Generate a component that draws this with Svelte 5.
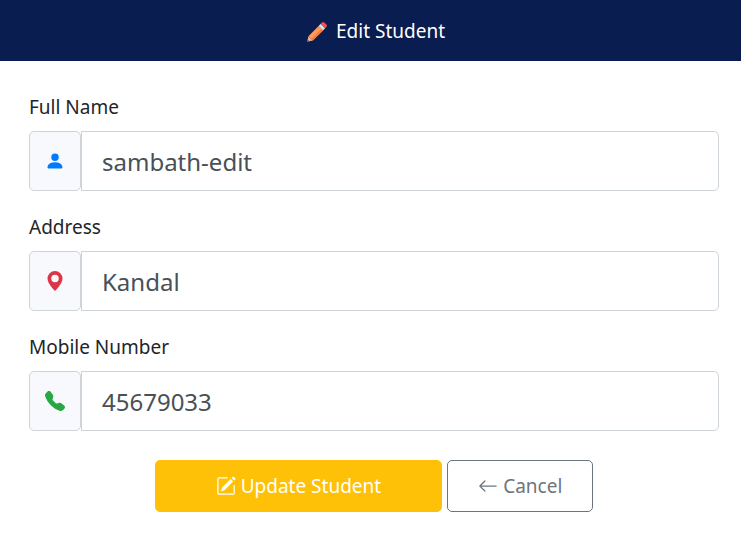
<script>
  let fullName = $state('sambath-edit');
  let address = $state('Kandal');
  let mobile = $state('45679033');
</script>

<header>
  <h1>
    <svg class="pencil" viewBox="0 0 22 22" aria-hidden="true">
      <path fill="#f4b183" d="M1.2 20.8 2.4 15.2 6.8 19.6Z" />
      <path fill="#6b5a60" d="M1.2 20.8 1.700 18.400 3.600 20.300Z" />
      <path fill="#ff9a56" d="M2.400 15.200 12.600 5 17 9.400 6.800 19.600Z" />
      <path fill="#f07a45" d="M5.300 18.100 15.500 7.900 17 9.400 6.800 19.600Z" />
      <path fill="#d5dfe8" d="M12.600 5 14.800 2.800 19.200 7.200 17 9.400Z" />
      <path fill="#f8504f" d="M14.800 2.800 16.200 1.400Q17.200.6 18.200 1.400L20.600 3.800Q21.400 4.800 20.600 5.800L19.200 7.200Z" />
    </svg>
    <span>Edit Student</span>
  </h1>
</header>

<form onsubmit={(e) => e.preventDefault()}>
  <div class="field">
    <label for="full-name">Full Name</label>
    <div class="group">
      <span class="addon user">
        <svg viewBox="0 0 16 16" fill="currentColor" aria-hidden="true">
          <path d="M3 14s-1 0-1-1 1-4 6-4 6 3 6 4-1 1-1 1zm5-6a3 3 0 1 0 0-6 3 3 0 0 0 0 6" />
        </svg>
      </span>
      <input id="full-name" type="text" bind:value={fullName} />
    </div>
  </div>

  <div class="field">
    <label for="address">Address</label>
    <div class="group">
      <span class="addon place">
        <svg viewBox="0 0 16 16" fill="currentColor" aria-hidden="true">
          <path d="M8 16s6-5.686 6-10A6 6 0 0 0 2 6c0 4.314 6 10 6 10m0-7a3 3 0 1 1 0-6 3 3 0 0 1 0 6" />
        </svg>
      </span>
      <input id="address" type="text" bind:value={address} />
    </div>
  </div>

  <div class="field">
    <label for="mobile">Mobile Number</label>
    <div class="group">
      <span class="addon phone">
        <svg viewBox="0 0 16 16" fill="currentColor" aria-hidden="true">
          <path fill-rule="evenodd" d="M1.885.511a1.745 1.745 0 0 1 2.610.163L6.290 2.980c.329.423.445.974.315 1.494l-.547 2.190a.68.68 0 0 0 .178.643l2.457 2.457a.68.68 0 0 0 .644.178l2.189-.547a1.750 1.750 0 0 1 1.494.315l2.306 1.794c.829.645.905 1.870.163 2.611l-1.034 1.034c-.74.740-1.846 1.065-2.877.702a18.600 18.600 0 0 1-7.010-4.420 18.600 18.600 0 0 1-4.420-7.009c-.362-1.030-.037-2.137.703-2.877z" />
        </svg>
      </span>
      <input id="mobile" type="tel" bind:value={mobile} />
    </div>
  </div>

  <div class="actions">
    <button class="update" type="submit">
      <svg viewBox="0 0 16 16" fill="currentColor" aria-hidden="true">
        <path d="M15.502 1.940a.5.5 0 0 1 0 .706L14.459 3.690l-2-2L13.502.646a.5.5 0 0 1 .707 0l1.293 1.293zm-1.750 2.456-2-2L4.939 9.210a.5.5 0 0 0-.121.196l-.805 2.414a.25.25 0 0 0 .316.316l2.414-.805a.5.5 0 0 0 .196-.120z" />
        <path fill-rule="evenodd" d="M1 13.500A1.500 1.500 0 0 0 2.500 15h11a1.500 1.500 0 0 0 1.500-1.500v-6a.5.5 0 0 0-1 0v6a.5.5 0 0 1-.5.5h-11a.5.5 0 0 1-.5-.5v-11a.5.5 0 0 1 .5-.5H9a.5.5 0 0 0 0-1H2.500A1.500 1.500 0 0 0 1 2.500z" />
      </svg>
      Update Student
    </button>
    <button class="cancel" type="button">
      <svg viewBox="0 0 16 16" fill="currentColor" aria-hidden="true">
        <path fill-rule="evenodd" d="M15 8a.5.5 0 0 0-.5-.5H2.707l3.147-3.146a.5.5 0 1 0-.708-.708l-4 4a.5.5 0 0 0 0 .708l4 4a.5.5 0 0 0 .708-.708L2.707 8.500H14.500A.5.5 0 0 0 15 8" />
      </svg>
      Cancel
    </button>
  </div>
</form>

<style>
  :global(body) {
    background: #fff;
    color: #212529;
    font-family: 'Segoe UI', 'Noto Sans', 'Open Sans', sans-serif;
    font-size: 19px;
  }

  header {
    background: #0a1d51;
    color: #fff;
    padding: 17px 10px 15px 20px;
  }

  h1 {
    display: flex;
    align-items: center;
    justify-content: center;
    gap: 8px;
    margin: 0;
    font-size: 19px;
    font-weight: 400;
    line-height: 29px;
  }

  svg {
    display: block;
    flex: none;
    width: 20px;
    height: 20px;
  }

  .pencil {
    width: 22px;
    height: 22px;
  }

  form {
    padding: 31px 22px 21px 29px;
  }

  .field {
    margin-bottom: 21px;
  }

  label {
    display: block;
    margin-bottom: 9px;
    line-height: 30px;
  }

  .group {
    display: flex;
    height: 60px;
  }

  .addon {
    box-sizing: border-box;
    display: flex;
    align-items: center;
    justify-content: center;
    width: 52px;
    border: 1px solid #ced4da;
    border-radius: 5px;
    background: #f8f9fc;
  }

  .user {
    color: #007bff;
  }

  .place {
    color: #dc3545;
  }

  .phone {
    color: #28a745;
  }

  input {
    box-sizing: border-box;
    flex: 1;
    min-width: 0;
    padding: 0 20px;
    border: 1px solid #ced4da;
    border-radius: 0 5px 5px 0;
    background: #fff;
    color: #495057;
    font: inherit;
    font-size: 24px;
  }

  .actions {
    display: flex;
    justify-content: center;
    gap: 5px;
    padding-top: 8px;
  }

  button {
    display: flex;
    align-items: center;
    justify-content: center;
    gap: 5px;
    height: 52px;
    border: 1px solid;
    border-radius: 5px;
    font: inherit;
    cursor: pointer;
  }

  .update {
    padding: 0 60px;
    border-color: #ffc107;
    background: #ffc107;
    color: #fff;
  }

  .cancel {
    padding: 0 30px;
    border-color: #6c757d;
    background: #fff;
    color: #6c757d;
  }
</style>
